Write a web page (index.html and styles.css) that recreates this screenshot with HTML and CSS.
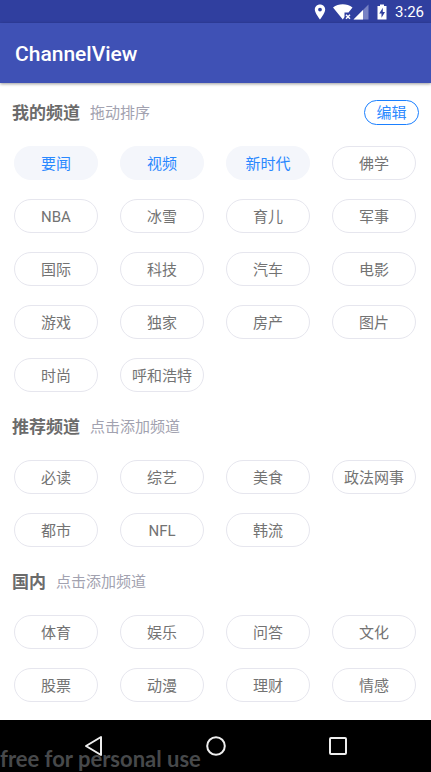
FILE: index.html
```html
<!DOCTYPE html>
<html lang="zh-CN">
<head>
<meta charset="utf-8">
<meta name="viewport" content="width=device-width, initial-scale=1">
<title>ChannelView</title>
<link rel="stylesheet" href="styles.css">
</head>
<body>
<div class="status-bar">
  <svg class="icon-pin" width="12" height="16" viewBox="0 0 12 16" aria-hidden="true"><path fill="#fff" fill-rule="evenodd" d="M6 0.500C3 .5.800 2.700.800 5.600c0 3.700 5.200 9.900 5.200 9.900s5.200-6.200 5.200-9.900C11.200 2.700 9 .5 6 .5zM6 3.700a1.900 1.900 0 1 1 0 3.800 1.900 1.900 0 0 1 0-3.800z"/></svg>
  <svg class="icon-wifi" width="20" height="16" viewBox="0 0 20 16" aria-hidden="true"><path fill="#fff" d="M0 3.500C5.500-.7 14-.7 19.500 3.500L15.500 8.500H11.500V13L9.800 15.500z"/><path fill="none" stroke="#fff" stroke-width="1.500" d="M13 10.800l4 4M17 10.800l-4 4"/></svg>
  <svg class="icon-signal" width="16" height="16" viewBox="0 0 16 16" aria-hidden="true"><path fill="#7882c4" d="M15.500 0.500v15H.5z"/><path fill="#fff" d="M10 6v9.500H.5z"/></svg>
  <svg class="icon-battery" width="10" height="16" viewBox="0 0 10 16" aria-hidden="true"><path fill="#fff" d="M3 .5h4V2h2.500v13.500h-9V2H3z"/><path fill="#303f9f" d="M5.800 3.800L2.200 9.500h2.300v4.200L8 8H5.800z"/></svg>
  <time class="clock">3:26</time>
</div>
<header class="app-bar"><h1 class="app-title">ChannelView</h1></header>
<main class="channels">
  <section class="group">
    <div class="group-header">
      <h2 class="group-title">我的频道</h2><span class="group-hint">拖动排序</span>
      <button class="edit" type="button">编辑</button>
    </div>
    <div class="grid">
      <button class="chip fixed" type="button">要闻</button>
      <button class="chip fixed" type="button">视频</button>
      <button class="chip fixed" type="button">新时代</button>
      <button class="chip" type="button">佛学</button>
      <button class="chip" type="button">NBA</button>
      <button class="chip" type="button">冰雪</button>
      <button class="chip" type="button">育儿</button>
      <button class="chip" type="button">军事</button>
      <button class="chip" type="button">国际</button>
      <button class="chip" type="button">科技</button>
      <button class="chip" type="button">汽车</button>
      <button class="chip" type="button">电影</button>
      <button class="chip" type="button">游戏</button>
      <button class="chip" type="button">独家</button>
      <button class="chip" type="button">房产</button>
      <button class="chip" type="button">图片</button>
      <button class="chip" type="button">时尚</button>
      <button class="chip" type="button">呼和浩特</button>
    </div>
  </section>
  <section class="group">
    <div class="group-header">
      <h2 class="group-title">推荐频道</h2><span class="group-hint">点击添加频道</span>
    </div>
    <div class="grid">
      <button class="chip" type="button">必读</button>
      <button class="chip" type="button">综艺</button>
      <button class="chip" type="button">美食</button>
      <button class="chip" type="button">政法网事</button>
      <button class="chip" type="button">都市</button>
      <button class="chip" type="button">NFL</button>
      <button class="chip" type="button">韩流</button>
    </div>
  </section>
  <section class="group">
    <div class="group-header">
      <h2 class="group-title">国内</h2><span class="group-hint">点击添加频道</span>
    </div>
    <div class="grid">
      <button class="chip" type="button">体育</button>
      <button class="chip" type="button">娱乐</button>
      <button class="chip" type="button">问答</button>
      <button class="chip" type="button">文化</button>
      <button class="chip" type="button">股票</button>
      <button class="chip" type="button">动漫</button>
      <button class="chip" type="button">理财</button>
      <button class="chip" type="button">情感</button>
    </div>
  </section>
</main>
<nav class="nav-bar">
  <span class="watermark">free for personal use</span>
  <button class="nav-button" type="button" aria-label="返回"><svg width="22" height="22" viewBox="0 0 22 22"><path fill="none" stroke="#eee" stroke-width="2" stroke-linejoin="round" d="M18 2v18L3 11z"/></svg></button>
  <button class="nav-button" type="button" aria-label="主页"><svg width="22" height="22" viewBox="0 0 22 22"><circle cx="11" cy="11" r="8.800" fill="none" stroke="#eee" stroke-width="2"/></svg></button>
  <button class="nav-button" type="button" aria-label="概览"><svg width="22" height="22" viewBox="0 0 22 22"><rect x="3" y="3" width="16" height="16" rx="1" fill="none" stroke="#eee" stroke-width="2"/></svg></button>
</nav>
</body>
</html>
```
FILE: styles.css
```css
* {
  box-sizing: border-box;
}

body {
  margin: 0;
  min-height: 100vh;
  display: flex;
  flex-direction: column;
  background: #fff;
  color: #737373;
  font-family: Roboto, "Noto Sans CJK SC", sans-serif;
  font-size: 15px;
}

button {
  margin: 0;
  padding: 0;
  border: 0;
  background: none;
  color: inherit;
  font: inherit;
}

svg {
  display: block;
}

.status-bar {
  display: flex;
  align-items: center;
  justify-content: flex-end;
  height: 23px;
  padding-right: 7px;
  background: #303f9f;
  color: #fff;
}

.icon-pin {
  margin-right: 7px;
}

.icon-signal {
  margin-right: 8px;
}

.icon-battery {
  margin-right: 8px;
}

.clock {
  line-height: 23px;
  padding-top: 1px;
}

.app-bar {
  display: flex;
  align-items: center;
  height: 60px;
  padding: 2px 15px 0;
  background: #3f51b5;
  box-shadow: 0 1px 3px rgba(0, 0, 0, 0.4);
}

.app-title {
  margin: 0;
  color: #fff;
  font-size: 21px;
  font-weight: 500;
}

.channels {
  flex: 1;
}

.group-header {
  display: flex;
  align-items: center;
  gap: 10px;
  height: 58px;
  padding: 0 12px;
}

.group-title,
.group-hint {
  padding-bottom: 2px;
}

.group-title {
  margin: 0;
  font-size: 17px;
  font-weight: 700;
  color: #6b6b6b;
}

.group-hint {
  color: #a2a2b0;
}

.edit {
  width: 55px;
  height: 25px;
  margin-left: auto;
  padding-top: 1px;
  border: 1px solid #1b80ff;
  border-radius: 13px;
  color: #2a88ff;
  line-height: 22px;
}

.grid {
  display: grid;
  grid-template-columns: repeat(4, 1fr);
  gap: 19px 22px;
  padding: 5px 15px 5px 14px;
}

.chip {
  height: 34px;
  padding-top: 2px;
  border: 1px solid #e6e6ee;
  border-radius: 17px;
  line-height: 30px;
  white-space: nowrap;
}

.fixed {
  border-color: #f4f6fb;
  background: #f4f6fb;
  color: #2a88ff;
}

.nav-bar {
  position: relative;
  display: flex;
  height: 52px;
  padding: 0 32px 0 33px;
  overflow: hidden;
  background: #000;
}

.nav-button {
  position: relative;
  display: flex;
  flex: 1;
  align-items: center;
  justify-content: center;
}

.watermark {
  position: absolute;
  left: 0;
  bottom: 0;
  color: #47494b;
  font-family: Lato, sans-serif;
  font-size: 22px;
  font-weight: 700;
  line-height: 26px;
  white-space: nowrap;
}
```
